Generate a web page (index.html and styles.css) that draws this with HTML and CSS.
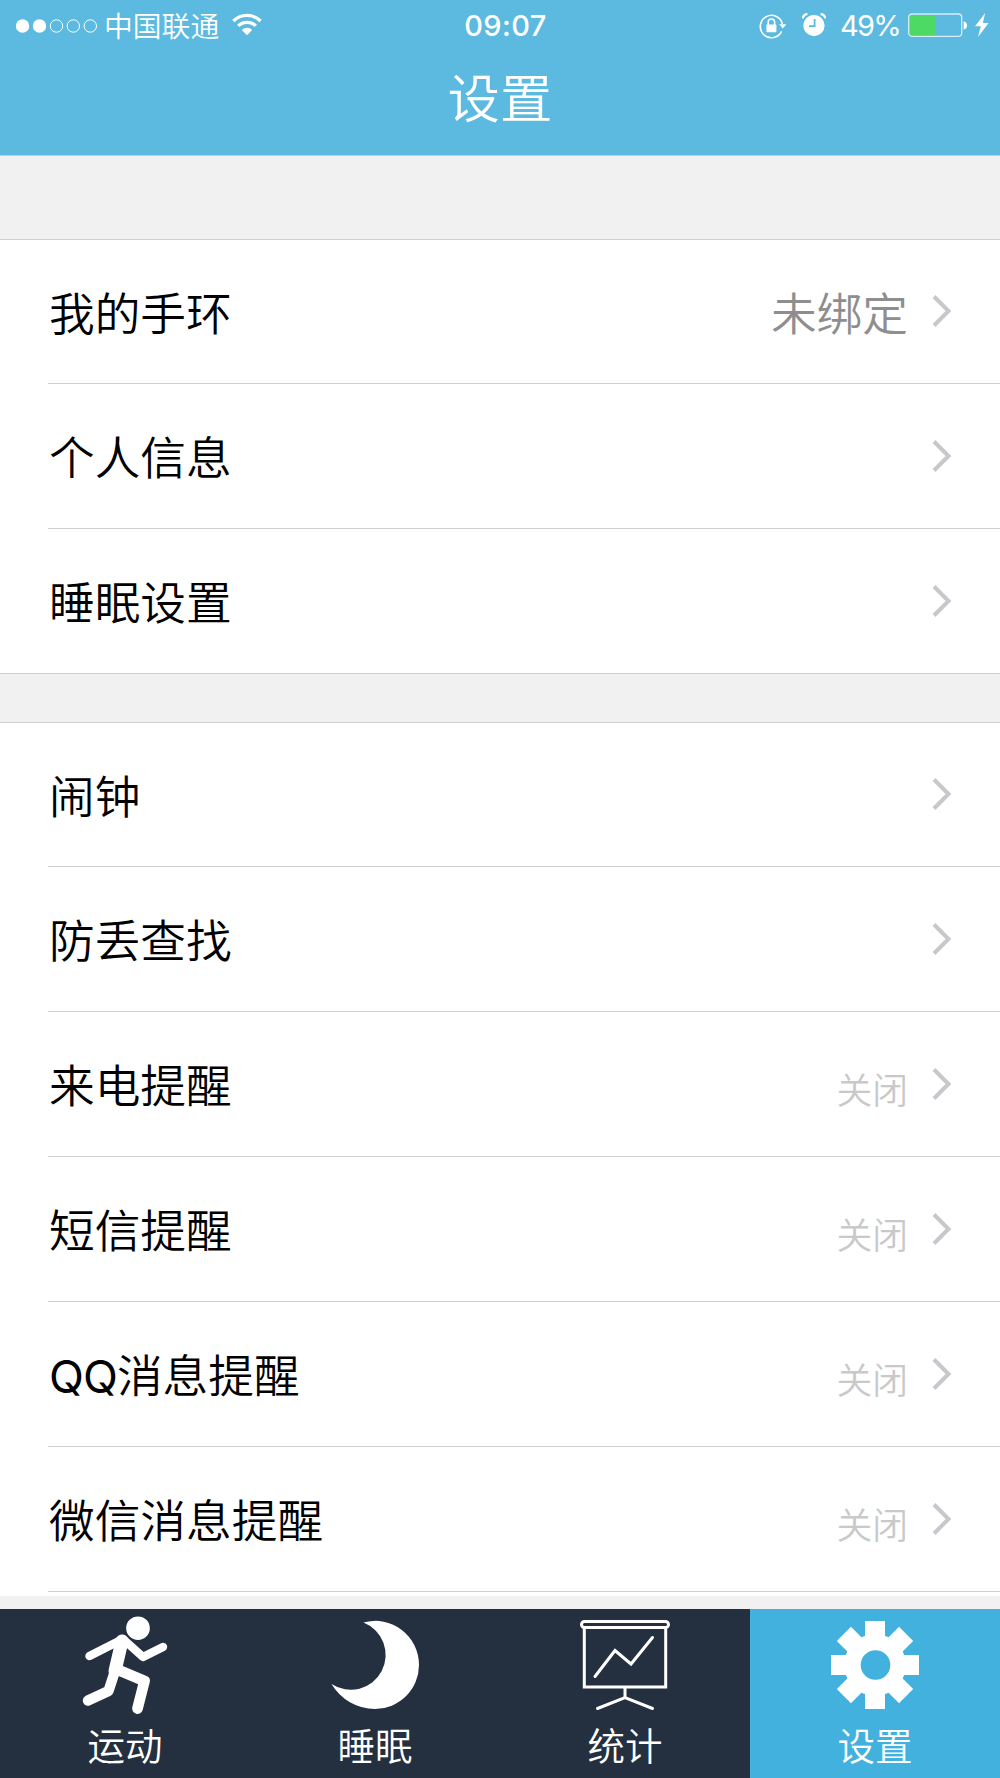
FILE: index.html
```html
<!DOCTYPE html>
<html lang="zh-CN">
<head>
    <meta charset="utf-8">
    <title>设置</title>
    <link rel="stylesheet" href="styles.css">
</head>
<body>
    <svg width="0" height="0" class="defs">
        <symbol id="chevron" viewBox="0 0 20 34">
            <path d="M2 2.5 L16.5 17 L2 31.5" fill="none" stroke="#c7c7cc" stroke-width="4"/>
        </symbol>
    </svg>

    <header class="header">
        <div class="status">
            <div class="status-left">
                <svg class="signal" width="82" height="14" viewBox="0 0 82 14">
                    <g fill="#fff">
                        <circle cx="6.6" cy="7" r="6.7"/>
                        <circle cx="23.5" cy="7" r="6.7"/>
                    </g>
                    <g fill="none" stroke="#fff" stroke-width="1">
                        <circle cx="40.5" cy="7" r="6.2"/>
                        <circle cx="57.3" cy="7" r="6.2"/>
                        <circle cx="74.3" cy="7" r="6.2"/>
                    </g>
                </svg>
                <span class="carrier">中国联通</span>
                <svg class="wifi" width="30" height="23" viewBox="0 0 30 23">
                    <g fill="none" stroke="#fff" stroke-width="3.3">
                        <path d="M1.4 8 A19.4 19.4 0 0 1 28.6 8"/>
                        <path d="M6.2 12.9 A12.6 12.6 0 0 1 23.8 12.9"/>
                    </g>
                    <path d="M9.8 17 A7.3 7.3 0 0 1 20.2 17 L15 22.3 Z" fill="#fff"/>
                </svg>
            </div>
            <span class="time">09:07</span>
            <div class="status-right">
                <svg class="lock" width="28" height="26" viewBox="0 0 28 26">
                    <path d="M22.6 18.4 A11.2 11.2 0 1 1 23.4 11" fill="none" stroke="#fff" stroke-width="1.6"/>
                    <path d="M20.2 11.2 H27.4 L23.8 15.4 Z" fill="#fff"/>
                    <rect x="7.4" y="11.4" width="10" height="7.8" rx="0.8" fill="#fff"/>
                    <path d="M9.2 12 V9.2 A3.2 3.2 0 0 1 15.6 9.2 V12" fill="none" stroke="#fff" stroke-width="1.6"/>
                </svg>
                <svg class="alarm" width="24" height="24" viewBox="0 0 24 24">
                    <circle cx="12" cy="12.6" r="10.6" fill="#fff"/>
                    <path d="M0.8 5.4 A4.4 4.4 0 0 1 5.4 1.2 M18.6 1.2 A4.4 4.4 0 0 1 23.2 5.4" fill="none" stroke="#fff" stroke-width="2.2"/>
                    <path d="M12.6 6 V13.2 H7" fill="none" stroke="#5ab9df" stroke-width="1.8"/>
                </svg>
                <span class="percent">49%</span>
                <svg class="battery" width="60" height="25" viewBox="0 0 60 25">
                    <rect x="0.7" y="1" width="53" height="22.4" rx="3.4" fill="none" stroke="#d4edf8" stroke-width="1.3"/>
                    <path d="M3.5 2.2 H27 V22.2 H3.5 Q2 22.2 2 20.5 V4 Q2 2.2 3.5 2.2 Z" fill="#4cd964"/>
                    <path d="M55.6 8.2 Q59 9.2 59 12.4 Q59 15.6 55.6 16.6 Z" fill="#fff"/>
                </svg>
                <svg class="bolt" width="14" height="24" viewBox="0 0 14 24">
                    <path d="M10.2 0 L0 13.2 H5.8 L3 24 L13.6 10 H7.8 Z" fill="#fff"/>
                </svg>
            </div>
        </div>
        <h1 class="title">设置</h1>
    </header>

    <main class="content">
        <ul class="group">
            <li class="row">
                <span class="label">我的手环</span>
                <span class="value">未绑定</span>
                <svg class="chevron"><use href="#chevron"/></svg>
            </li>
            <li class="row">
                <span class="label">个人信息</span>
                <svg class="chevron"><use href="#chevron"/></svg>
            </li>
            <li class="row">
                <span class="label">睡眠设置</span>
                <svg class="chevron"><use href="#chevron"/></svg>
            </li>
        </ul>

        <ul class="group group-last">
            <li class="row">
                <span class="label">闹钟</span>
                <svg class="chevron"><use href="#chevron"/></svg>
            </li>
            <li class="row">
                <span class="label">防丢查找</span>
                <svg class="chevron"><use href="#chevron"/></svg>
            </li>
            <li class="row">
                <span class="label">来电提醒</span>
                <span class="value value-off">关闭</span>
                <svg class="chevron"><use href="#chevron"/></svg>
            </li>
            <li class="row">
                <span class="label">短信提醒</span>
                <span class="value value-off">关闭</span>
                <svg class="chevron"><use href="#chevron"/></svg>
            </li>
            <li class="row">
                <span class="label"><span class="latin">QQ</span>消息提醒</span>
                <span class="value value-off">关闭</span>
                <svg class="chevron"><use href="#chevron"/></svg>
            </li>
            <li class="row">
                <span class="label">微信消息提醒</span>
                <span class="value value-off">关闭</span>
                <svg class="chevron"><use href="#chevron"/></svg>
            </li>
        </ul>
    </main>

    <nav class="tabs">
        <a class="tab">
            <svg class="tab-icon" viewBox="0 0 100 100">
                <circle cx="63" cy="17.2" r="11.8" fill="#fff"/>
                <g fill="none" stroke="#fff" stroke-linecap="round" stroke-linejoin="round">
                    <path d="M14.5 45 L48 28 L68 46 L88 36" stroke-width="8.4"/>
                    <path d="M47 30 L40 60" stroke-width="13"/>
                    <path d="M40 60 L33.5 80 L13 89.5" stroke-width="10.4"/>
                    <path d="M41 58 L69.5 70 L62.5 97.5" stroke-width="10.8"/>
                </g>
            </svg>
            <span class="tab-text">运动</span>
        </a>
        <a class="tab">
            <svg class="tab-icon" viewBox="0 0 100 100">
                <path d="M38.5 11.4 A44 44 0 0 1 94 54 A44 44 0 0 1 50 98 A51 51 0 0 1 6.5 73 A34.9 34.9 0 1 0 38.5 11.4 Z" fill="#fff"/>
            </svg>
            <span class="tab-text">睡眠</span>
        </a>
        <a class="tab">
            <svg class="tab-icon" viewBox="0 0 100 100">
                <g fill="none" stroke="#fff" stroke-width="3">
                    <rect x="6.5" y="10.5" width="87" height="6" rx="3"/>
                    <path d="M9.3 17 V76 H90.7 V17"/>
                    <path d="M50 76 V87.5"/>
                    <path d="M22.5 97.5 L50 86.5 L77.5 97.5" stroke-linecap="round"/>
                    <path d="M20 65.5 L40 39.5 L56 53 L77.5 26.5" stroke-linecap="round"/>
                </g>
            </svg>
            <span class="tab-text">统计</span>
        </a>
        <a class="tab tab-active">
            <svg class="tab-icon" viewBox="0 0 100 100">
                <g fill="#fff">
                    <rect x="40" y="10" width="20" height="88"/>
                    <rect x="40" y="10" width="20" height="88" transform="rotate(45 50 54)"/>
                    <rect x="40" y="10" width="20" height="88" transform="rotate(90 50 54)"/>
                    <rect x="40" y="10" width="20" height="88" transform="rotate(135 50 54)"/>
                    <circle cx="50" cy="54" r="30.8"/>
                </g>
                <circle cx="50.5" cy="54" r="14.8" fill="#43b1de"/>
            </svg>
            <span class="tab-text">设置</span>
        </a>
    </nav>
</body>
</html>
```

FILE: styles.css
```css
* {
    box-sizing: border-box;
}

body {
    margin: 0;
    height: 1778px;
    display: flex;
    flex-direction: column;
    background-color: #f1f1f1;
    color: #000;
    font-family: "Noto Sans CJK SC", sans-serif;
    font-weight: 350;
    overflow: hidden;
}

.defs {
    position: absolute;
}

.header {
    height: 156px;
    background-color: #5cb9df;
    border-bottom: 1px solid #c4cdd2;
    color: #fff;
}

.status {
    height: 50px;
    padding: 0 11px 0 16px;
    display: grid;
    grid-template-columns: 1fr auto 1fr;
    align-items: center;
}

.status-left, .status-right {
    display: flex;
    align-items: center;
}

.status-right {
    justify-content: flex-end;
}

.carrier {
    margin: 0 0 2px 6px;
    font-size: 28.8px;
    line-height: 48px;
}

.wifi {
    margin: 0 0 3px 13px;
}

.time {
    padding-left: 6px;
    font-family: Inter, sans-serif;
    font-size: 29px;
    font-weight: 500;
    line-height: 50px;
    letter-spacing: 0.4px;
}

.alarm {
    margin: 0 0 2px 15px;
}

.percent {
    margin: 1px 8px 0 14px;
    font-family: Inter, sans-serif;
    font-size: 29px;
    font-weight: 400;
    line-height: 50px;
    letter-spacing: -1.7px;
}

.bolt {
    margin: 0 0 2px 7px;
}

.title {
    margin: 0;
    font-size: 52.4px;
    font-weight: 350;
    line-height: 90px;
    text-align: center;
}

.content {
    flex: 1;
    padding-top: 83px;
}

.group {
    margin: 0 0 48px;
    padding: 0 0 0 48px;
    list-style: none;
    background-color: #fff;
    border-top: 1px solid #cfcfcf;
    border-bottom: 1px solid #cfcfcf;
}

.group-last {
    margin: 0;
    padding-bottom: 4px;
    border-bottom: none;
}

.row {
    height: 145px;
    padding-right: 48px;
    display: flex;
    align-items: center;
    border-bottom: 1px solid #cfcfcf;
}

.row:first-child {
    height: 144px;
}

.group:not(.group-last) .row:last-child {
    height: 144px;
    border-bottom: none;
}

.label {
    flex: 1;
    padding: 0 0 2px 1px;
    font-size: 45.7px;
}

.latin {
    font-family: Inter, sans-serif;
    font-weight: 400;
    line-height: 1;
    letter-spacing: -1px;
}

.value {
    margin-right: 24px;
    padding-bottom: 2px;
    color: #8e8e8e;
    font-size: 45.7px;
}

.value-off {
    padding: 7px 0 0;
    color: #c9c9c9;
    font-size: 35.8px;
}

.chevron {
    width: 20px;
    height: 34px;
    margin-bottom: 1px;
}

.tabs {
    height: 169px;
    display: grid;
    grid-template-columns: repeat(4, 1fr);
    background-color: #242f3f;
    color: #fff;
}

.tab {
    display: flex;
    flex-direction: column;
    align-items: center;
    padding-top: 2px;
}

.tab-active {
    background-color: #43b1de;
}

.tab-icon {
    width: 100px;
    height: 100px;
    overflow: visible;
}

.tab-text {
    font-size: 37.5px;
    line-height: 65px;
}
```
